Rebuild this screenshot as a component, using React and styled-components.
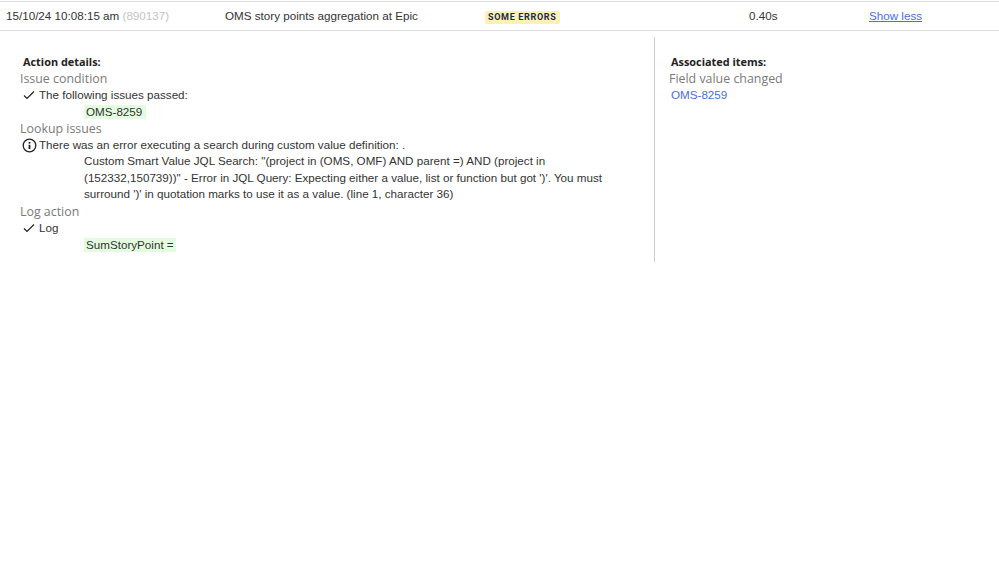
import React from "react";
import styled, { createGlobalStyle } from "styled-components";

const Global = createGlobalStyle`
  html, body { margin: 0; padding: 0; background: #fff; }
  body { font-family: "Liberation Sans", Arial, sans-serif; font-size: 11.65px; color: #333; }
`;

const Row = styled.div`
  display: flex;
  align-items: center;
  height: 28px;
  margin-top: 1px;
  border-top: 1px solid #ddd;
  border-bottom: 1px solid #ddd;
  line-height: 16px;
  color: #333;
`;
const Cell = styled.div`
  flex: none;
  width: ${p => p.$w}px;
  padding-left: ${p => p.$pl || 0}px;
  box-sizing: border-box;
  white-space: nowrap;
`;
const Muted = styled.span`color: #c4c4c4;`;
const Badge = styled.span`
  display: inline-block;
  background: #fff0b3;
  color: #172b4d;
  font: 700 9px/13px "Roboto", sans-serif;
  letter-spacing: 0.68px;
  padding: 0 3px;
  border-radius: 2px;
`;
const RowLink = styled.a`
  color: #4a6ee0;
  text-decoration: underline;
`;
const Details = styled.div`
  display: flex;
  margin-top: 6px;
`;
const Left = styled.div`
  width: 655px;
  flex: none;
  box-sizing: border-box;
  height: 225px;
  padding: 16px 0 0 20px;
  border-right: 1px solid #ccc;
`;
const Right = styled.div`
  padding: 16px 0 0 14px;
`;
const Title = styled.div`
  font: 700 10.9px/17px "Open Sans", sans-serif;
  color: #222;
  margin-left: ${p => p.$ml}px;
`;
const Group = styled.div`
  font: 400 12.4px/17px "Open Sans", sans-serif;
  color: #7a7a7a;
`;
const Line = styled.div`
  display: flex;
  align-items: center;
  height: 16px;
  line-height: 16px;
  color: #333;
  margin-left: 2px;
`;
const IconSlot = styled.span`
  display: inline-flex;
  width: 17px;
  justify-content: flex-start;
  flex: none;
`;
const Indented = styled.div`
  margin-left: 64px;
  width: 525px;
  line-height: 16.5px;
  color: #333;
`;
const Tag = styled.span`
  display: inline-block;
  background: #e3fcdf;
  padding: 0 ${p => p.$pr || 2}px 0 2px;
  line-height: 14px;
  color: #333;
`;
const TagLine = styled.div`
  margin: 2px 0 0 64px;
  height: 15px;
  line-height: 14px;
`;
const ItemLink = styled.a`
  display: block;
  margin-left: 2px;
  line-height: 16px;
  color: #4a6ee0;
  text-decoration: none;
`;

const Check = () => (
  <svg width="14" height="10" viewBox="0 0 14 10" fill="none" stroke="#222" strokeWidth="1.2">
    <path d="M2 5.5 L5 8.5 L12 1.5" />
  </svg>
);
const Info = () => (
  <svg width="15" height="15" viewBox="0 0 15 15" fill="none" stroke="#222" strokeWidth="1.3">
    <circle cx="7.5" cy="7.5" r="6.3" />
    <path d="M7.5 6.8 V11" strokeWidth="1.8" />
    <path d="M7.5 4 V5.6" strokeWidth="1.8" />
  </svg>
);

export default function App() {
  return (
    <>
      <Global />
      <Row>
        <Cell $w={225} $pl={6}>15/10/24 10:08:15 am <Muted>(890137)</Muted></Cell>
        <Cell $w={260}>OMS story points aggregation at Epic</Cell>
        <Cell $w={264}><Badge>SOME ERRORS</Badge></Cell>
        <Cell $w={120}>0.40s</Cell>
        <Cell $w={100}><RowLink href="#">Show less</RowLink></Cell>
      </Row>
      <Details>
        <Left>
          <Title $ml={3}>Action details:</Title>
          <Group>Issue condition</Group>
          <Line><IconSlot><Check /></IconSlot>The following issues passed:</Line>
          <TagLine><Tag $pr={3.5}>OMS-8259</Tag></TagLine>
          <Group>Lookup issues</Group>
          <Line><IconSlot><Info /></IconSlot>There was an error executing a search during custom value definition: .</Line>
          <Indented>
            Custom Smart Value JQL Search: "(project in (OMS, OMF) AND parent =) AND (project in (152332,150739))" - Error in JQL Query: Expecting either a value, list or function but got ')'. You must surround ')' in quotation marks to use it as a value. (line 1, character 36)
          </Indented>
          <Group>Log action</Group>
          <Line><IconSlot><Check /></IconSlot>Log</Line>
          <TagLine><Tag>SumStoryPoint =</Tag></TagLine>
        </Left>
        <Right>
          <Title $ml={2}>Associated items:</Title>
          <Group>Field value changed</Group>
          <ItemLink href="#">OMS-8259</ItemLink>
        </Right>
      </Details>
    </>
  );
}
